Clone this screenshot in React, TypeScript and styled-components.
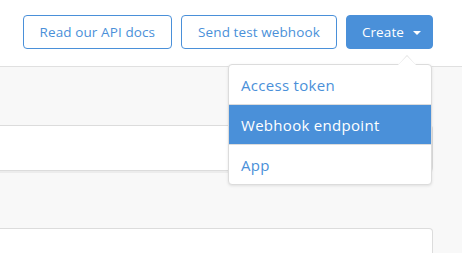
import styled, { createGlobalStyle } from "styled-components"

const GlobalStyle = createGlobalStyle`
  html, body {
    margin: 0;
    padding: 0;
    height: 100%;
  }
  body {
    font-family: "Open Sans", "Liberation Sans", sans-serif;
    background: #ffffff;
  }
`

const BLUE = "#4a90d9"

const Page = styled.div`
  display: flex;
  flex-direction: column;
  height: 100vh;
  overflow: hidden;
`

const Header = styled.header`
  display: flex;
  justify-content: flex-end;
  align-items: flex-start;
  gap: 9px;
  height: 67px;
  flex-shrink: 0;
  box-sizing: border-box;
  padding: 15px 29px 0 0;
  border-bottom: 1px solid #e0e0e0;
  background: #fff;
  position: relative;
  z-index: 2;
`

const Button = styled.button<{ $primary?: boolean }>`
  display: flex;
  align-items: center;
  gap: 9px;
  height: 34px;
  padding: ${(p) => (p.$primary ? "0 11px 0 15px" : "0 16px")};
  border-radius: 4px;
  border: 1px solid ${BLUE};
  background: ${(p) => (p.$primary ? BLUE : "#fff")};
  color: ${(p) => (p.$primary ? "#fff" : BLUE)};
  font-family: inherit;
  font-size: 13.5px;
  letter-spacing: 0.1px;
  cursor: pointer;
`

const Caret = styled.span`
  width: 0;
  height: 0;
  border-left: 4px solid transparent;
  border-right: 4px solid transparent;
  border-top: 4px solid #fff;
  margin-top: 1px;
`

const MenuWrap = styled.div`
  position: relative;
`

const Menu = styled.ul`
  position: absolute;
  top: 49px;
  right: 1px;
  width: 204px;
  margin: 0;
  padding: 0;
  list-style: none;
  background: #fff;
  border: 1px solid #dcdcdc;
  border-radius: 4px;
  box-shadow: 0 1px 3px rgba(0, 0, 0, 0.1);
  box-sizing: border-box;

  &::before,
  &::after {
    content: "";
    position: absolute;
    right: 15px;
    width: 0;
    height: 0;
    border-left: 9px solid transparent;
    border-right: 9px solid transparent;
  }
  &::before {
    top: -10px;
    border-bottom: 10px solid #dcdcdc;
  }
  &::after {
    top: -9px;
    border-bottom: 9px solid #fff;
  }
`

const MenuItem = styled.li<{ $active?: boolean }>`
  height: 39px;
  display: flex;
  align-items: center;
  padding: 0 12px;
  font-size: 15px;
  letter-spacing: 0.3px;
  color: ${(p) => (p.$active ? "#fff" : BLUE)};
  background: ${(p) => (p.$active ? BLUE : "transparent")};
  & + & {
    border-top: 1px solid #dcdcdc;
  }
`

const Main = styled.main`
  flex: 1;
  background: #f8f8f8;
  padding: 58px 29px 0 0;
  display: flex;
  flex-direction: column;
  gap: 57px;
`

const Card = styled.div<{ $height: number }>`
  height: ${(p) => p.$height}px;
  flex-shrink: 0;
  background: #fff;
  border: 1px solid #dcdcdc;
  border-left: none;
  border-radius: 0 4px 4px 0;
  box-shadow: 0 2px 0 #ececec;
`

export default function App() {
  return (
    <Page>
      <GlobalStyle />
      <Header>
        <Button>Read our API docs</Button>
        <Button>Send test webhook</Button>
        <MenuWrap>
          <Button $primary>
            Create
            <Caret />
          </Button>
          <Menu>
            <MenuItem>Access token</MenuItem>
            <MenuItem $active>Webhook endpoint</MenuItem>
            <MenuItem>App</MenuItem>
          </Menu>
        </MenuWrap>
      </Header>
      <Main>
        <Card $height={44} />
        <Card $height={40} />
      </Main>
    </Page>
  )
}
